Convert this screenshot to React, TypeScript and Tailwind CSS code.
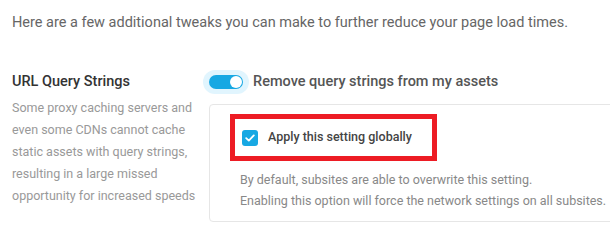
import { ReactNode } from "react";

const Toggle = () => {
  return (
    <span className="flex items-center rounded-full bg-[#e1f5fe] px-[6px] py-[5px]">
      <span className="flex h-[14px] w-[34px] items-center justify-end rounded-full bg-[#17a8e3] pr-[1px]">
        <span className="h-[12px] w-[12px] rounded-full bg-white" />
      </span>
    </span>
  );
};

const Checkbox = () => {
  return (
    <span className="flex h-[16px] w-[16px] items-center justify-center rounded-[3px] bg-[#17a8e3]">
      <svg width="10" height="8" viewBox="0 0 10 8" fill="none">
        <path
          d="M1.2 4.2L3.8 6.6L8.8 1.4"
          stroke="white"
          strokeWidth="1.8"
          strokeLinecap="round"
          strokeLinejoin="round"
        />
      </svg>
    </span>
  );
};

const Label = (props: { children: ReactNode }) => {
  return (
    <h3 className="text-[14.5px] font-medium leading-[24px] text-[#333]">
      {props.children}
    </h3>
  );
};

export default function App() {
  return (
    <div className="h-[229px] w-[610px] overflow-hidden bg-white font-['Roboto',sans-serif]">
      <p className="pl-3 pt-[13px] text-[14.5px] leading-[20px] text-[#666]">
        Here are a few additional tweaks you can make to further reduce your
        page load times.
      </p>
      <div className="mt-[37px] flex">
        <div className="w-[203px] shrink-0 pl-3">
          <Label>URL Query Strings</Label>
          <p className="mt-[3px] text-[12.5px] leading-[22px] text-[#999]">
            Some proxy caching servers and even some CDNs cannot cache static
            assets with query strings, resulting in a large missed opportunity
            for increased speeds
          </p>
        </div>
        <div className="shrink-0">
          <div className="flex h-[24px] items-center">
            <Toggle />
            <span className="ml-[4px] text-[14.5px] font-medium text-[#555]">
              Remove query strings from my assets
            </span>
          </div>
          <div className="ml-[6px] mt-[10px] w-[420px] rounded-[4px] border border-[#e6e6e6] pb-[10px] pt-[9px]">
            <div className="ml-[20px] flex h-[47px] w-[207px] items-center border-[5px] border-[#ed1c24] pl-[7px]">
              <Checkbox />
              <span className="ml-[10px] text-[12.5px] font-medium text-[#444]">
                Apply this setting globally
              </span>
            </div>
            <p className="mt-[8px] pl-[30px] text-[12.5px] leading-[21px] text-[#888]">
              By default, subsites are able to overwrite this setting.
              <br />
              Enabling this option will force the network settings on all
              subsites.
            </p>
          </div>
        </div>
      </div>
    </div>
  );
}
